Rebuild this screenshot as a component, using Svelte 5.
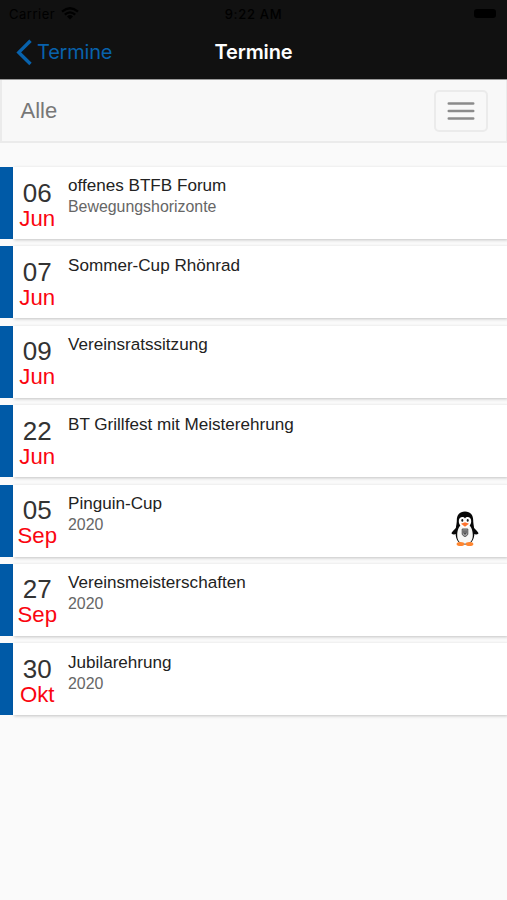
<script lang="ts">
	type Termin = {
		day: string;
		month: string;
		title: string;
		subtitle?: string;
		penguin?: boolean;
	};

	const termine: Termin[] = [
		{ day: '06', month: 'Jun', title: 'offenes BTFB Forum', subtitle: 'Bewegungshorizonte' },
		{ day: '07', month: 'Jun', title: 'Sommer-Cup Rhönrad' },
		{ day: '09', month: 'Jun', title: 'Vereinsratssitzung' },
		{ day: '22', month: 'Jun', title: 'BT Grillfest mit Meisterehrung' },
		{ day: '05', month: 'Sep', title: 'Pinguin-Cup', subtitle: '2020', penguin: true },
		{ day: '27', month: 'Sep', title: 'Vereinsmeisterschaften', subtitle: '2020' },
		{ day: '30', month: 'Okt', title: 'Jubilarehrung', subtitle: '2020' }
	];
</script>

<div class="screen">
	<header>
		<div class="status-bar">
			<div class="carrier">
				<span>Carrier</span>
				<svg width="18" height="13" viewBox="0 0 18 13" aria-hidden="true">
					<path d="M1 4.6Q9-2.2 17 4.6M3.8 7.6Q9 3.2 14.2 7.6" fill="none" stroke="#000" stroke-width="2.3" />
					<path d="M6 9.4Q9 6.8 12 9.4L9 12.6Z" />
				</svg>
			</div>
			<time>9:22 AM</time>
			<div class="battery"></div>
		</div>
		<nav>
			<a class="back" href="#termine">
				<svg width="17" height="27" viewBox="0 0 17 27" aria-hidden="true">
					<path d="M15.5 1.8 3.8 13.4 15.5 25" fill="none" stroke="currentColor" stroke-width="3.4" />
				</svg>
				<span>Termine</span>
			</a>
			<h1>Termine</h1>
		</nav>
	</header>

	<div class="filter">
		<span>Alle</span>
		<button aria-label="Menü">
			<svg width="28" height="20" viewBox="0 0 28 20" aria-hidden="true">
				<path d="M1.800 2.500h24.400M1.800 10h24.400M1.800 17.500h24.400" stroke="#8b8b8b" stroke-width="2.600" stroke-linecap="round" />
			</svg>
		</button>
	</div>

	<main>
		{#each termine as termin}
			<article>
				<div class="card">
					<div class="date">
						<div class="day">{termin.day}</div>
						<div class="month">{termin.month}</div>
					</div>
					<div class="info">
						<h2>{termin.title}</h2>
						{#if termin.subtitle}
							<p>{termin.subtitle}</p>
						{/if}
					</div>
					{#if termin.penguin}
						<svg class="penguin" width="28" height="36" viewBox="0 0 28 36" aria-label="Pinguin">
							<path d="M7 14C5 18 1 20 .5 22.500c1.800 1.800 5 1 7-1.500ZM21 14c2 4 6 6 6.500 8.500-1.800 1.800-5 1-7-1.500Z" fill="#080808" />
							<path d="M14 .6C8.400.6 5.800 4.600 5.800 9.200 5.800 13 4.600 16 4.600 22c0 7 3.400 11.500 9.400 11.500s9.400-4.500 9.400-11.500c0-6-1.200-9-1.200-12.800C22.200 4.600 19.600.6 14 .6Z" fill="#080808" />
							<path d="M14 12.500c-5.500 0-7.800 6-7.800 11.700 0 5.600 3 8.600 7.800 8.600s7.800-3 7.800-8.600c0-5.700-2.300-11.700-7.800-11.700Z" fill="#f7f7f5" />
							<path d="M14 7.400C12.400 5 7.800 5.600 7.800 10c0 4 2.600 6.500 6.200 6.500s6.200-2.500 6.200-6.500c0-4.400-4.600-5-6.200-2.600Z" fill="#fff" />
							<ellipse cx="11.300" cy="9.400" rx="1" ry="1.400" fill="#222" />
							<ellipse cx="16.700" cy="9.400" rx="1" ry="1.400" fill="#222" />
							<path d="M10 12.800 14 11.300l4 1.500L14 15.700Z" fill="#ff732d" />
							<path d="M11.200 18h5.600v5.200q-.5 1.600-2.800 2.400-2.300-.8-2.800-2.400Z" fill="#aaa" stroke="#555" />
							<path d="M13 19.200v3.300q1 1.300 2 0v-3.300" fill="none" stroke="#333" />
							<ellipse cx="9.500" cy="33" rx="3.900" ry="2" fill="#ff8630" />
							<ellipse cx="18.500" cy="33" rx="3.900" ry="2" fill="#ff8630" />
						</svg>
					{/if}
				</div>
			</article>
		{/each}
	</main>
</div>

<style>
	:global(body) {
		background: #fafafa;
	}

	.screen {
		min-height: 900px;
		background: #fafafa;
		font-family: 'Liberation Sans', Arial, sans-serif;
		overflow: hidden;
	}

	header {
		height: 80px;
		box-sizing: border-box;
		background: #111;
		border-bottom: 1px solid #999;
		font-family: Inter, sans-serif;
	}

	.status-bar,
	nav {
		display: grid;
		grid-template-columns: 1fr auto 1fr;
		align-items: center;
	}

	.status-bar {
		height: 27px;
		padding: 0 11px 0 9px;
		color: #000;
		font-size: 13px;
	}

	.carrier {
		display: flex;
		align-items: center;
		gap: 6px;
		letter-spacing: 0.5px;
	}

	time {
		padding-left: 2px;
		font-weight: 500;
		letter-spacing: 0.7px;
	}

	.battery {
		justify-self: end;
		width: 22px;
		height: 9px;
		border-radius: 3px;
		background: #000;
	}

	nav {
		height: 50px;
		padding: 0 15px;
	}

	.back {
		display: flex;
		align-items: center;
		gap: 5px;
		color: #0862ac;
		font-size: 20px;
		letter-spacing: -0.2px;
		text-decoration: none;
	}

	h1 {
		margin: 0;
		color: #fff;
		font-size: 20px;
		font-weight: 600;
		letter-spacing: -0.1px;
	}

	.filter {
		display: flex;
		align-items: center;
		justify-content: space-between;
		box-sizing: border-box;
		height: 63px;
		padding: 1px 18.5px;
		background: #f8f8f8;
		border: solid #ebebeb;
		border-width: 0 1px 2px 2px;
		color: #777;
		font-size: 22px;
	}

	button {
		display: flex;
		align-items: center;
		justify-content: center;
		box-sizing: border-box;
		width: 54px;
		height: 42px;
		padding: 0;
		background: transparent;
		border: 2px solid #ebebeb;
		border-radius: 5px;
	}

	main {
		display: flex;
		flex-direction: column;
		gap: 7.4px;
		margin-top: 24px;
	}

	article {
		height: 72px;
		padding-left: 13px;
		background: #005aa7;
	}

	.card {
		display: flex;
		height: 72px;
		background: #fff;
		box-shadow: 1px 1px 3px rgba(0, 0, 0, 0.22);
	}

	.date {
		width: 48.5px;
		padding-top: 11.5px;
		color: #333;
		text-align: center;
	}

	.day {
		font-size: 26px;
		line-height: 29px;
	}

	.month {
		color: #fa0510;
		font-size: 22.2px;
		line-height: 22px;
	}

	.info {
		flex: 1;
		padding: 8.4px 0 0 6.5px;
	}

	h2,
	p {
		margin: 0;
		font-weight: 400;
	}

	h2 {
		color: #222;
		font-size: 17.1px;
		line-height: 22px;
	}

	p {
		color: #666;
		font-size: 15.9px;
		line-height: 20px;
	}

	.penguin {
		margin: 26px 28px 0 0;
	}
</style>
